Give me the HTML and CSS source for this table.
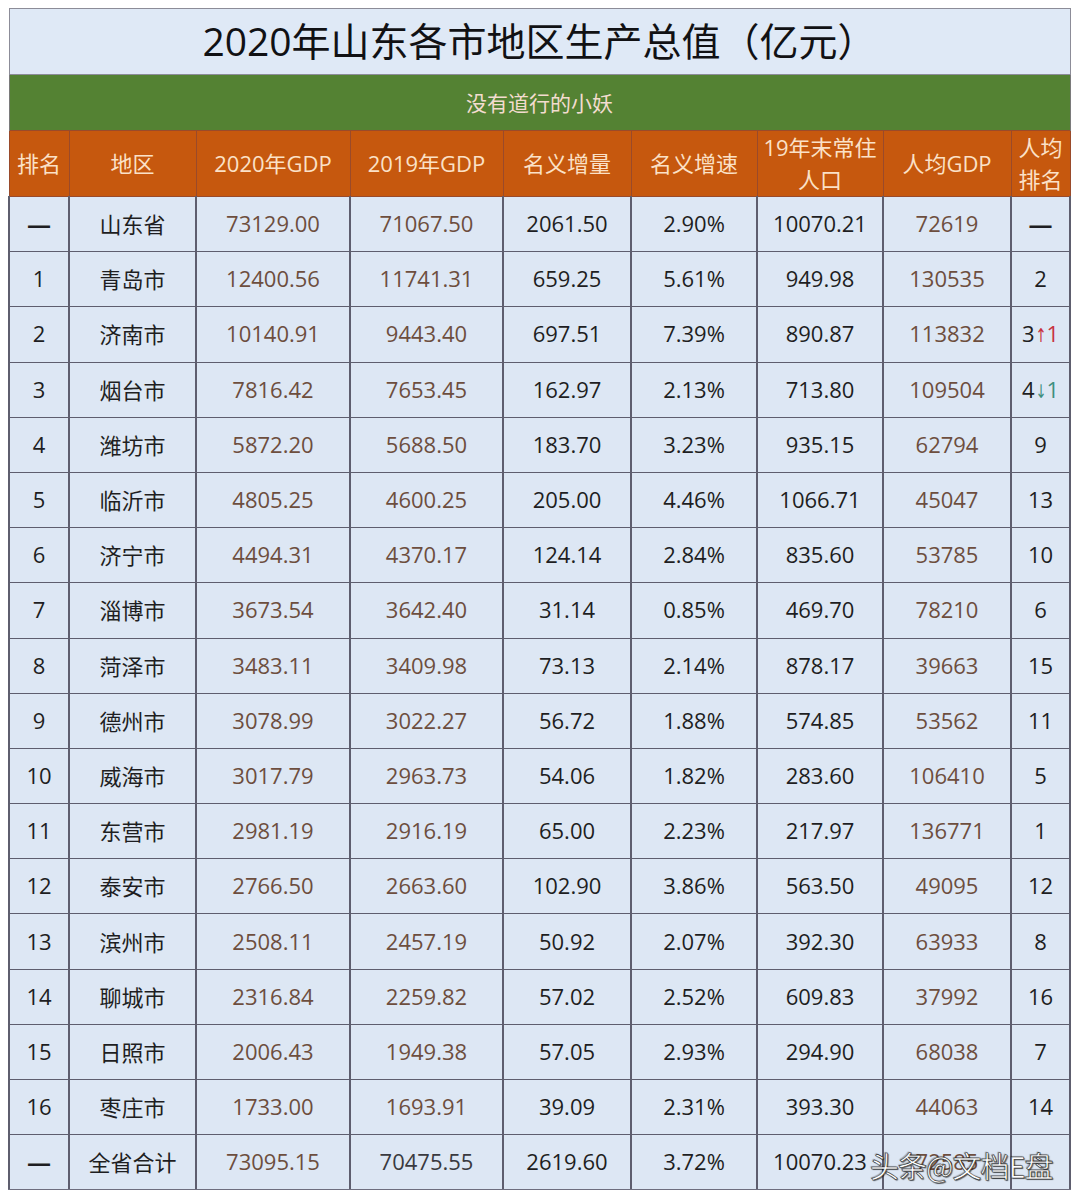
FILE: index.html
```
<!DOCTYPE html>
<html lang="zh-CN">
<head>
<meta charset="utf-8">
<title>2020年山东各市地区生产总值</title>
<link rel="stylesheet" href="styles.css">
</head>
<body>
<div class="sheet">
<table class="gdp">
  <colgroup>
    <col class="c-rank"><col class="c-area"><col class="c-g20"><col class="c-g19"><col class="c-inc"><col class="c-rate"><col class="c-pop"><col class="c-pc"><col class="c-pcr">
  </colgroup>
  <thead>
    <tr class="title-row"><th colspan="9">2020年山东各市地区生产总值（亿元）</th></tr>
    <tr class="sub-row"><th colspan="9">没有道行的小妖</th></tr>
    <tr class="head-row">
      <th>排名</th><th>地区</th><th>2020年GDP</th><th>2019年GDP</th><th>名义增量</th><th>名义增速</th><th class="two">19年末常住<br>人口</th><th>人均GDP</th><th class="two">人均<br>排名</th>
    </tr>
  </thead>
  <tbody>
    <tr><td class="dash">—</td><td>山东省</td><td class="b">73129.00</td><td class="b">71067.50</td><td>2061.50</td><td>2.90%</td><td>10070.21</td><td class="b">72619</td><td class="dash">—</td></tr>
    <tr><td>1</td><td>青岛市</td><td class="b">12400.56</td><td class="b">11741.31</td><td>659.25</td><td>5.61%</td><td>949.98</td><td class="b">130535</td><td>2</td></tr>
    <tr><td>2</td><td>济南市</td><td class="b">10140.91</td><td class="b">9443.40</td><td>697.51</td><td>7.39%</td><td>890.87</td><td class="b">113832</td><td>3<span class="up"><span class="arr">↑</span>1</span></td></tr>
    <tr><td>3</td><td>烟台市</td><td class="b">7816.42</td><td class="b">7653.45</td><td>162.97</td><td>2.13%</td><td>713.80</td><td class="b">109504</td><td>4<span class="down"><span class="arr">↓</span>1</span></td></tr>
    <tr><td>4</td><td>潍坊市</td><td class="b">5872.20</td><td class="b">5688.50</td><td>183.70</td><td>3.23%</td><td>935.15</td><td class="b">62794</td><td>9</td></tr>
    <tr><td>5</td><td>临沂市</td><td class="b">4805.25</td><td class="b">4600.25</td><td>205.00</td><td>4.46%</td><td>1066.71</td><td class="b">45047</td><td>13</td></tr>
    <tr><td>6</td><td>济宁市</td><td class="b">4494.31</td><td class="b">4370.17</td><td>124.14</td><td>2.84%</td><td>835.60</td><td class="b">53785</td><td>10</td></tr>
    <tr><td>7</td><td>淄博市</td><td class="b">3673.54</td><td class="b">3642.40</td><td>31.14</td><td>0.85%</td><td>469.70</td><td class="b">78210</td><td>6</td></tr>
    <tr><td>8</td><td>菏泽市</td><td class="b">3483.11</td><td class="b">3409.98</td><td>73.13</td><td>2.14%</td><td>878.17</td><td class="b">39663</td><td>15</td></tr>
    <tr><td>9</td><td>德州市</td><td class="b">3078.99</td><td class="b">3022.27</td><td>56.72</td><td>1.88%</td><td>574.85</td><td class="b">53562</td><td>11</td></tr>
    <tr><td>10</td><td>威海市</td><td class="b">3017.79</td><td class="b">2963.73</td><td>54.06</td><td>1.82%</td><td>283.60</td><td class="b">106410</td><td>5</td></tr>
    <tr><td>11</td><td>东营市</td><td class="b">2981.19</td><td class="b">2916.19</td><td>65.00</td><td>2.23%</td><td>217.97</td><td class="b">136771</td><td>1</td></tr>
    <tr><td>12</td><td>泰安市</td><td class="b">2766.50</td><td class="b">2663.60</td><td>102.90</td><td>3.86%</td><td>563.50</td><td class="b">49095</td><td>12</td></tr>
    <tr><td>13</td><td>滨州市</td><td class="b">2508.11</td><td class="b">2457.19</td><td>50.92</td><td>2.07%</td><td>392.30</td><td class="b">63933</td><td>8</td></tr>
    <tr><td>14</td><td>聊城市</td><td class="b">2316.84</td><td class="b">2259.82</td><td>57.02</td><td>2.52%</td><td>609.83</td><td class="b">37992</td><td>16</td></tr>
    <tr><td>15</td><td>日照市</td><td class="b">2006.43</td><td class="b">1949.38</td><td>57.05</td><td>2.93%</td><td>294.90</td><td class="b">68038</td><td>7</td></tr>
    <tr><td>16</td><td>枣庄市</td><td class="b">1733.00</td><td class="b">1693.91</td><td>39.09</td><td>2.31%</td><td>393.30</td><td class="b">44063</td><td>14</td></tr>
    <tr><td class="dash">—</td><td>全省合计</td><td class="b">73095.15</td><td class="g">70475.55</td><td>2619.60</td><td>3.72%</td><td>10070.23</td><td class="b">72585</td><td></td></tr>
  </tbody>
</table>
<div class="watermark">头条@文档E盘</div>
</div>
</body>
</html>
```

FILE: styles.css
```
html, body {
  margin: 0;
  padding: 0;
  background: #ffffff;
}
body {
  padding: 8px 0 0 8px;
  font-family: "Open Sans", "Noto Sans CJK SC", sans-serif;
  color: #1e1e22;
}
.sheet {
  position: relative;
  width: 1061px;
}
.gdp {
  border-collapse: collapse;
  table-layout: fixed;
  width: 1061px;
}
.c-rank { width: 60px; }
.c-area { width: 127px; }
.c-g20 { width: 154px; }
.c-g19 { width: 153px; }
.c-inc { width: 128px; }
.c-rate { width: 126px; }
.c-pop { width: 126px; }
.c-pc { width: 128px; }
.c-pcr { width: 59px; }

.gdp th, .gdp td {
  padding: 0;
  text-align: center;
  vertical-align: middle;
  white-space: nowrap;
}
.title-row th {
  height: 63px;
  background: #dfe9f6;
  border: 1px solid #8c8c98;
  font-weight: normal;
  font-size: 39px;
  line-height: 46px;
  padding-bottom: 2px;
  color: #111114;
}
.sub-row th {
  height: 53px;
  background: #548233;
  border-left: 1px solid #7a7a7a;
  border-right: 1px solid #7a7a7a;
  font-weight: normal;
  font-size: 21px;
  color: #f3dccf;
  padding-bottom: 2px;
}
.head-row th {
  height: 63px;
  background: #c6580e;
  border: 1px solid #9a4a2a;
  font-weight: normal;
  font-size: 22px;
  color: #fbe1c7;
  line-height: 32px;
  padding-bottom: 1px;
}
.gdp td {
  height: 52.2px;
  background: #dde7f4;
  border: 2px solid #5e5e6e;
  border-top-width: 1px;
  border-bottom-width: 1px;
  font-size: 22px;
  padding-bottom: 2px;
}
.gdp tbody tr:first-child td { border-top: 1px solid #5e5e6e; }
.gdp tbody tr:last-child td { border-bottom: 2px solid #6e6e7e; }
.gdp td.b { color: #6d4e3e; }
.gdp td.g { color: #3a3a40; }
.gdp td.dash { font-size: 24px; font-weight: bold; }
.up { color: #c8323f; }
.down { color: #3f8f80; }
.arr {
  font-family: "DejaVu Sans", sans-serif;
  font-size: 19px;
  display: inline-block;
  transform: scaleX(0.7);
  margin: 0 -2px;
}

.watermark {
  position: absolute;
  left: 862px;
  top: 1136px;
  font-family: "Noto Sans CJK SC", sans-serif;
  font-size: 29px;
  color: #ffffff;
  letter-spacing: -1px;
  -webkit-text-stroke: 0.6px #2a2a2a;
  text-shadow: 1px 1px 1px rgba(0,0,0,0.6), -1px -1px 1px rgba(0,0,0,0.3);
}
```
